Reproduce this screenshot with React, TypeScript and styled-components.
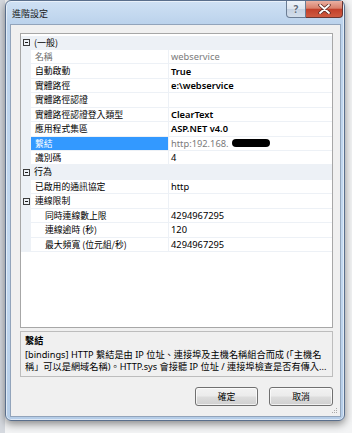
import React from 'react';
import styled, { createGlobalStyle } from 'styled-components';

const LINE = '#edf1f6';
const LATIN = '"Noto Sans", "Noto Sans CJK TC", sans-serif';
const CJK = '"Noto Sans CJK TC", "Noto Sans", sans-serif';

type Row =
  | { kind: 'category'; label: string }
  | {
      kind: 'prop';
      name: string;
      value: string;
      indent?: boolean;
      bold?: boolean;
      readOnly?: boolean;
      selected?: boolean;
      redacted?: boolean;
      expanded?: boolean;
    };

const rows: Row[] = [
  { kind: 'category', label: '(一般)' },
  { kind: 'prop', name: '名稱', value: 'webservice', readOnly: true },
  { kind: 'prop', name: '自動啟動', value: 'True', bold: true },
  { kind: 'prop', name: '實體路徑', value: 'e:\\webservice', bold: true },
  { kind: 'prop', name: '實體路徑認證', value: '' },
  { kind: 'prop', name: '實體路徑認證登入類型', value: 'ClearText', bold: true },
  { kind: 'prop', name: '應用程式集區', value: 'ASP.NET v4.0', bold: true },
  { kind: 'prop', name: '繫結', value: 'http:192.168.', selected: true, readOnly: true, redacted: true },
  { kind: 'prop', name: '識別碼', value: '4' },
  { kind: 'category', label: '行為' },
  { kind: 'prop', name: '已啟用的通訊協定', value: 'http' },
  { kind: 'prop', name: '連線限制', value: '', expanded: true },
  { kind: 'prop', name: '同時連線數上限', value: '4294967295', indent: true },
  { kind: 'prop', name: '連線逾時 (秒)', value: '120', indent: true },
  { kind: 'prop', name: '最大頻寬 (位元組/秒)', value: '4294967295', indent: true },
];

const GlobalStyle = createGlobalStyle`
  html, body { margin: 0; padding: 0; }
  body { background: #eceef1; font-family: ${LATIN}; }
`;

const Desktop = styled.div`
  width: 352px;
  height: 433px;
  overflow: hidden;
  box-sizing: border-box;
  padding-left: 5px;
  background: linear-gradient(to right, #d5d9df 0, #d5d9df 5px, #f3f4f5 5px);
`;

const Window = styled.div`
  width: 340px;
  height: 421px;
  box-sizing: border-box;
  display: flex;
  flex-direction: column;
  padding: 0 3px 3px 4px;
  border: 1px solid #5a6f8c;
  border-radius: 6px;
  background: linear-gradient(180deg, #cfe1f4 0%, #bcd3ec 22px, #c3d9f0 60%, #b5cde8 100%);
  box-shadow: 0 3px 8px rgba(0, 0, 0, 0.45), inset 0 0 0 1px rgba(255, 255, 255, 0.55);
`;

const TitleBar = styled.div`
  height: 23px;
  display: flex;
  justify-content: space-between;
  align-items: flex-start;
  margin-right: -2px;
`;

const Title = styled.div`
  padding: 7px 0 0 2px;
  font-family: ${CJK};
  font-size: 9px;
  line-height: 12px;
  color: #1a1a1a;
`;

const CaptionButtons = styled.div`
  display: flex;
`;

const HelpButton = styled.div`
  width: 20px;
  height: 17px;
  box-sizing: border-box;
  border: 1px solid #6b7d94;
  border-top: none;
  border-radius: 0 0 0 4px;
  background: linear-gradient(180deg, #eef3f9 0%, #dce5ef 48%, #c5d2e2 52%, #d3deeb 100%);
  display: flex;
  align-items: center;
  justify-content: center;
  font-family: ${LATIN};
  font-weight: bold;
  font-size: 10px;
  color: #5f6b7a;
  text-shadow: 0 0 2px #fff;
`;

const CloseButton = styled.div`
  width: 37px;
  height: 17px;
  box-sizing: border-box;
  border: 1px solid #6a3530;
  border-top: none;
  border-left: none;
  border-radius: 0 0 4px 0;
  background: linear-gradient(180deg, #eab0a2 0%, #d8806c 45%, #c2402a 52%, #cf5a40 100%);
  display: flex;
  align-items: center;
  justify-content: center;
`;

const Content = styled.div`
  position: relative;
  flex: 1;
  display: flex;
  flex-direction: column;
  padding: 8px 7px 0 9px;
  border: 1px solid #92a4bb;
  background: #f0f0f0;
`;

const PropertyGrid = styled.div`
  height: 295px;
  box-sizing: border-box;
  border: 1px solid #a7a7a7;
  background: #fff;
  padding-top: 1.5px;
`;

const GridRow = styled.div<{ $category?: boolean }>`
  height: 14.45px;
  box-sizing: border-box;
  display: grid;
  grid-template-columns: 10px 138px 1fr;
  border-bottom: 1px solid ${LINE};
  background: ${(p) => (p.$category ? LINE : '#fff')};
`;

const Margin = styled.div`
  background: ${LINE};
  display: flex;
  align-items: center;
  justify-content: center;
`;

const ToggleBox = styled.div`
  width: 7px;
  height: 7px;
  box-sizing: border-box;
  border: 1px solid #3c3c3c;
  position: relative;
  &::after {
    content: '';
    position: absolute;
    left: 1px;
    right: 1px;
    top: 2px;
    height: 1px;
    background: #1a1a1a;
  }
`;

const CategoryLabel = styled.div`
  grid-column: 2 / 4;
  padding-left: 3px;
  font-family: ${CJK};
  font-size: 9px;
  line-height: 13px;
  color: #000;
`;

const NameCell = styled.div<{ $selected?: boolean; $indent?: boolean; $readOnly?: boolean }>`
  padding-left: ${(p) => (p.$indent ? 14 : 4)}px;
  border-right: 1px solid ${LINE};
  background: ${(p) => (p.$selected ? '#3399ff' : 'transparent')};
  color: ${(p) => (p.$selected ? '#fff' : p.$readOnly ? '#6d6d6d' : '#000')};
  font-family: ${CJK};
  font-size: 8.8px;
  line-height: 13px;
  white-space: nowrap;
  overflow: hidden;
`;

const ValueCell = styled.div<{ $bold?: boolean; $readOnly?: boolean }>`
  padding-left: 2px;
  font-family: ${LATIN};
  font-size: 9.3px;
  line-height: 13px;
  font-weight: ${(p) => (p.$bold ? 600 : 'normal')};
  color: ${(p) => (p.$readOnly ? '#7a7a7a' : '#000')};
  white-space: nowrap;
  display: flex;
  align-items: center;
`;

const Redaction = styled.span`
  display: inline-block;
  width: 38px;
  height: 8px;
  margin-left: 3px;
  border-radius: 4px;
  background: #000;
`;

const Description = styled.div`
  margin-top: 3px;
  height: 46px;
  box-sizing: border-box;
  border: 1px solid #bdbdbd;
  padding: 2px 4px 0 4px;
  font-family: ${LATIN};
  font-size: 9.2px;
  line-height: 12px;
  color: #000;
`;

const DescTitle = styled.div`
  font-family: ${CJK};
  font-weight: bold;
`;

const DescLine = styled.div<{ $first?: boolean }>`
  margin-top: ${(p) => (p.$first ? 3 : 0)}px;
  white-space: nowrap;
  overflow: hidden;
`;

const ButtonRow = styled.div`
  margin-top: 10px;
  display: flex;
  justify-content: flex-end;
  gap: 11px;
`;

const DialogButton = styled.div<{ $width: number }>`
  width: ${(p) => p.$width}px;
  height: 19px;
  box-sizing: border-box;
  border: 1px solid #707070;
  border-radius: 3px;
  background: linear-gradient(180deg, #f2f2f2 0%, #ebebeb 48%, #dddddd 52%, #cfcfcf 100%);
  box-shadow: inset 0 0 0 1px rgba(255, 255, 255, 0.7);
  display: flex;
  align-items: center;
  justify-content: center;
  font-family: ${CJK};
  font-size: 8.8px;
  color: #000;
`;

const Grip = styled.svg`
  position: absolute;
  right: 2px;
  bottom: 2px;
`;

const CloseGlyph = () => (
  <svg width="13" height="10" viewBox="0 0 13 10">
    <path d="M2 1 L11 9 M11 1 L2 9" stroke="#5a2a25" strokeWidth="3.4" strokeLinecap="round" />
    <path d="M2 1 L11 9 M11 1 L2 9" stroke="#fff" strokeWidth="1.8" strokeLinecap="round" />
  </svg>
);

const App = () => {
  return (
    <Desktop>
      <GlobalStyle />
      <Window>
        <TitleBar>
          <Title>進階設定</Title>
          <CaptionButtons>
            <HelpButton>?</HelpButton>
            <CloseButton>
              <CloseGlyph />
            </CloseButton>
          </CaptionButtons>
        </TitleBar>
        <Content>
          <PropertyGrid>
            {rows.map((r, i) =>
              r.kind === 'category' ? (
                <GridRow key={i} $category>
                  <Margin>
                    <ToggleBox />
                  </Margin>
                  <CategoryLabel>{r.label}</CategoryLabel>
                </GridRow>
              ) : (
                <GridRow key={i}>
                  <Margin>{r.expanded && <ToggleBox />}</Margin>
                  <NameCell $selected={r.selected} $indent={r.indent} $readOnly={r.readOnly && !r.selected}>
                    {r.name}
                  </NameCell>
                  <ValueCell $bold={r.bold} $readOnly={r.readOnly}>
                    {r.value}
                    {r.redacted && <Redaction />}
                  </ValueCell>
                </GridRow>
              )
            )}
          </PropertyGrid>
          <Description>
            <DescTitle>繫結</DescTitle>
            <DescLine $first>[bindings] HTTP 繫結是由 IP 位址、連接埠及主機名稱組合而成 (「主機名</DescLine>
            <DescLine>稱」可以是網域名稱)。HTTP.sys 會接聽 IP 位址 / 連接埠檢查是否有傳入...</DescLine>
          </Description>
          <ButtonRow>
            <DialogButton $width={63}>確定</DialogButton>
            <DialogButton $width={64}>取消</DialogButton>
          </ButtonRow>
          <Grip width="6" height="6" viewBox="0 0 6 6">
            <rect x="4" y="0" width="1" height="1" fill="#a9a9a9" />
            <rect x="2" y="2" width="1" height="1" fill="#a9a9a9" />
            <rect x="4" y="2" width="1" height="1" fill="#a9a9a9" />
            <rect x="0" y="4" width="1" height="1" fill="#a9a9a9" />
            <rect x="2" y="4" width="1" height="1" fill="#a9a9a9" />
            <rect x="4" y="4" width="1" height="1" fill="#a9a9a9" />
          </Grip>
        </Content>
      </Window>
    </Desktop>
  );
};

export default App;
